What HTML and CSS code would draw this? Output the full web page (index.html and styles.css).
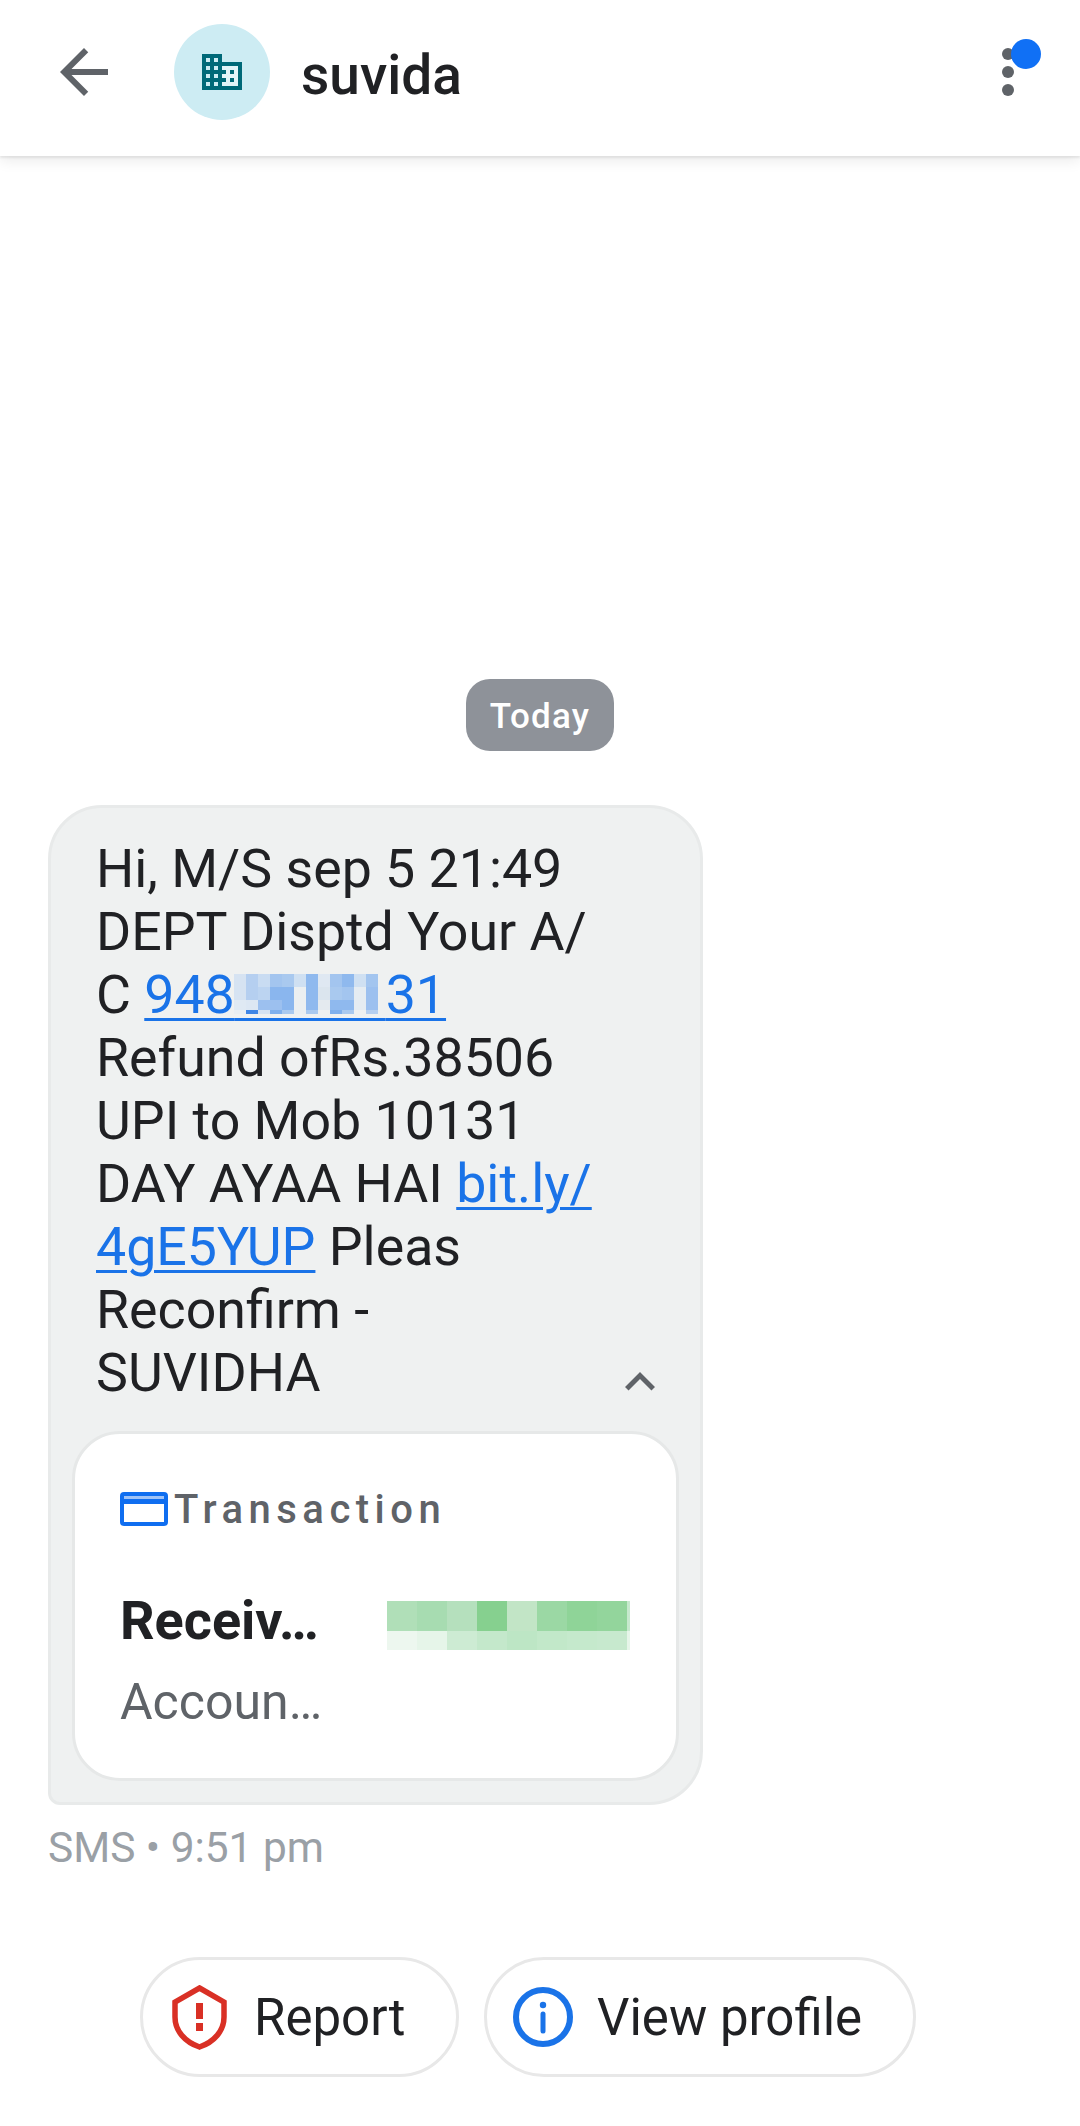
FILE: index.html
```html
<!DOCTYPE html>
<html lang="en">
<head>
<meta charset="utf-8">
<title>suvida</title>
<link rel="stylesheet" href="styles.css">
</head>
<body>
<header class="topbar">
  <svg class="back" viewBox="0 0 24 24"><path d="M20 11H7.83l5.59-5.59L12 4l-8 8 8 8 1.41-1.41L7.83 13H20v-2z"/></svg>
  <div class="avatar">
    <svg class="avatar-icon" viewBox="0 0 24 24"><path class="bldg-light" d="M12 9h8v10h-8z"/><path d="M12 7V3H2v18h20V7H12zM6 19H4v-2h2v2zm0-4H4v-2h2v2zm0-4H4V9h2v2zm0-4H4V5h2v2zm4 12H8v-2h2v2zm0-4H8v-2h2v2zm0-4H8V9h2v2zm0-4H8V5h2v2zm10 12h-8v-2h2v-2h-2v-2h2v-2h-2V9h8v10zm-2-8h-2v2h2v-2zm0 4h-2v2h2v-2z"/></svg>
  </div>
  <h1 class="title">suvida</h1>
  <div class="menu">
    <span class="dot"></span><span class="dot"></span><span class="dot"></span>
    <span class="badge"></span>
  </div>
</header>
<main class="thread">
  <div class="day-row"><span class="day">Today</span></div>
  <article class="bubble">
    <div class="body-row">
      <p class="message">Hi, M/S sep 5 21:49<br>DEPT Disptd Your A/<br>C <a class="link" href="#">948<span class="masked">00000<svg class="mosaic-num" viewBox="0 0 152 40" shape-rendering="crispEdges">
        <g><rect x="0" y="0" width="152" height="40" fill="#eff1f1"/>
        <rect x="0" y="0" width="12" height="26" fill="#d6e3f2"/><rect x="0" y="26" width="12" height="10" fill="#dfe9f3"/><rect x="0" y="36" width="12" height="4" fill="#e8eef3"/>
        <rect x="12" y="0" width="12" height="26" fill="#b5cff0"/><rect x="12" y="26" width="12" height="10" fill="#dce7f3"/><rect x="12" y="36" width="12" height="4" fill="#3f86e6"/>
        <rect x="24" y="0" width="12" height="13" fill="#c9dcf2"/><rect x="24" y="13" width="12" height="13" fill="#bcd4f1"/><rect x="24" y="26" width="12" height="10" fill="#9cc0ef"/><rect x="24" y="36" width="12" height="4" fill="#d6e3f2"/>
        <rect x="36" y="0" width="12" height="13" fill="#a3c5ef"/><rect x="36" y="13" width="12" height="13" fill="#8ab6ee"/><rect x="36" y="26" width="12" height="10" fill="#9cc0ef"/><rect x="36" y="36" width="12" height="4" fill="#7fb0ed"/>
        <rect x="48" y="0" width="12" height="13" fill="#a9c9ef"/><rect x="48" y="13" width="12" height="23" fill="#8ab6ee"/><rect x="48" y="36" width="12" height="4" fill="#a9c9ef"/>
        <rect x="60" y="0" width="12" height="13" fill="#cfe0f2"/><rect x="60" y="13" width="12" height="27" fill="#ebeff1"/>
        <rect x="72" y="0" width="12" height="36" fill="#8fb9ee"/><rect x="72" y="36" width="12" height="4" fill="#a9c9ef"/>
        <rect x="84" y="0" width="12" height="13" fill="#dfe8f2"/><rect x="84" y="13" width="12" height="13" fill="#dbe5ee"/><rect x="84" y="26" width="12" height="10" fill="#e4eaef"/>
        <rect x="96" y="0" width="12" height="13" fill="#a3c5ef"/><rect x="96" y="13" width="12" height="13" fill="#a9c9ef"/><rect x="96" y="26" width="12" height="10" fill="#8fb9ee"/><rect x="96" y="36" width="12" height="4" fill="#7fb0ed"/>
        <rect x="108" y="0" width="12" height="13" fill="#8fb9ee"/><rect x="108" y="13" width="12" height="13" fill="#a3c5ef"/><rect x="108" y="26" width="12" height="10" fill="#8fb9ee"/><rect x="108" y="36" width="12" height="4" fill="#a9c9ef"/>
        <rect x="120" y="0" width="12" height="13" fill="#cfe0f2"/><rect x="120" y="13" width="12" height="23" fill="#e5ecf2"/>
        <rect x="132" y="0" width="12" height="13" fill="#a3c5ef"/><rect x="132" y="13" width="12" height="23" fill="#9cc0ef"/><rect x="132" y="36" width="12" height="4" fill="#b5cff0"/></g>
      </svg></span>31</a><br>Refund ofRs.38506<br>UPI to Mob 10131<br>DAY AYAA HAI <a class="link" href="#">bit.ly/</a><br><a class="link" href="#">4gE5YUP</a> Pleas<br>Reconfirm -<br>SUVIDHA</p>
      <svg class="chevron" viewBox="0 0 24 24"><path d="M7.41 15.41 12 10.83l4.59 4.58L18 14l-6-6-6 6z"/></svg>
    </div>
    <section class="card">
      <div class="card-head">
        <svg class="card-icon" viewBox="0 0 48 34"><path class="card-stripe" d="M4 4h40v3H4z"/><path class="card-shape" d="M4 0h40a4 4 0 0 1 4 4v26a4 4 0 0 1-4 4H4a4 4 0 0 1-4-4V4a4 4 0 0 1 4-4zM4 4v3h40V4zM4 12v18h40V12z"/></svg>
        <span class="card-label">Transaction</span>
      </div>
      <div class="card-row">
        <span class="card-name">Receiv…</span>
        <svg class="mosaic-amt" viewBox="0 0 243 49" shape-rendering="crispEdges">
          <rect x="0" y="0" width="30" height="30" fill="#b0dfb8"/><rect x="30" y="0" width="30" height="30" fill="#a7dcb1"/><rect x="60" y="0" width="30" height="30" fill="#b5e0bd"/><rect x="90" y="0" width="30" height="30" fill="#86d08f"/><rect x="120" y="0" width="30" height="30" fill="#c2e5c6"/><rect x="150" y="0" width="30" height="30" fill="#9bd8a4"/><rect x="180" y="0" width="30" height="30" fill="#8fd498"/><rect x="210" y="0" width="30" height="30" fill="#93d59c"/><rect x="240" y="0" width="3" height="30" fill="#c7e9ce"/>
          <rect x="0" y="30" width="30" height="19" fill="#edf7ef"/><rect x="30" y="30" width="30" height="19" fill="#e6f5e9"/><rect x="60" y="30" width="30" height="19" fill="#cdebd3"/><rect x="90" y="30" width="30" height="19" fill="#c4e8cb"/><rect x="120" y="30" width="30" height="19" fill="#bde6c5"/><rect x="150" y="30" width="30" height="19" fill="#c2e8c9"/><rect x="180" y="30" width="30" height="19" fill="#c5e9cc"/><rect x="210" y="30" width="30" height="19" fill="#c7e9ce"/><rect x="240" y="30" width="3" height="19" fill="#e6f5e9"/>
        </svg>
      </div>
      <div class="card-sub">Accoun…</div>
    </section>
  </article>
  <div class="meta">SMS • 9:51 pm</div>
  <div class="actions">
    <button class="chip">
      <svg class="chip-shield" viewBox="0 0 55 65"><path class="shield-line" d="M27.5 3 52 17v15c0 14-10 25-24.500 30C13 57 3 46 3 32V17z"/><path class="shield-mark" d="M24 18h7v16h-7zM24 38h7v8h-7z"/></svg>
      <span>Report</span>
    </button>
    <button class="chip">
      <svg class="chip-info" viewBox="0 0 60 60"><circle class="info-ring" cx="30" cy="30" r="27"/><circle class="info-dot" cx="30" cy="18" r="3.200"/><path class="info-bar" d="M30 27v17"/></svg>
      <span>View profile</span>
    </button>
  </div>
</main>
</body>
</html>
```
FILE: styles.css
```css
* { box-sizing: border-box; }
html, body { margin: 0; padding: 0; }
body {
  width: 1080px;
  height: 2126px;
  overflow: hidden;
  background: #fff;
  font-family: Roboto, "Liberation Sans", sans-serif;
  color: #202124;
}
.topbar {
  position: relative;
  height: 156px;
  display: flex;
  align-items: center;
  padding: 0 0 12px 48px;
  background: #fff;
  box-shadow: 0 2px 2px rgba(0,0,0,.07), 0 4px 14px rgba(0,0,0,.09);
}
.back { width: 72px; height: 72px; fill: #5f6368; flex: none; }
.avatar {
  width: 96px;
  height: 96px;
  margin-left: 54px;
  border-radius: 50%;
  background: #cdecf3;
  display: flex;
  align-items: center;
  justify-content: center;
  flex: none;
}
.avatar-icon { width: 48px; height: 48px; fill: #006978; }
.bldg-light { fill: #e2f4f8; }
.title {
  margin: 6px 0 0 31px;
  font-size: 55px;
  font-weight: 500;
  line-height: 60px;
  color: #202124;
}
.menu {
  margin-left: auto;
  margin-right: 66px;
  width: 12px;
  display: flex;
  flex-direction: column;
  gap: 6px;
  position: relative;
}
.dot { width: 12px; height: 12px; border-radius: 50%; background: #5f6368; }
.badge {
  position: absolute;
  top: -9px;
  left: 9px;
  width: 30px;
  height: 30px;
  border-radius: 50%;
  background: #1070f5;
}
.thread { padding: 523px 0 0 48px; }
.day-row { display: flex; width: 984px; justify-content: center; }
.day {
  width: 148px;
  height: 72px;
  border-radius: 24px;
  background: #8e9299;
  color: #fff;
  font-size: 35px;
  font-weight: 500;
  letter-spacing: 1.200px;
  line-height: 76px;
  text-align: center;
}
.bubble {
  width: 655px;
  height: 1000px;
  margin-top: 54px;
  padding: 29px 21px 0;
  background: #eff1f1;
  border: 3px solid #e8eaea;
  border-radius: 54px 54px 54px 12px;
}
.body-row { display: flex; justify-content: space-between; align-items: flex-end; }
.message {
  margin: 0 0 0 24px;
  font-size: 53.700px;
  line-height: 63px;
  color: #202124;
  white-space: nowrap;
}
.link { color: #1a73e8; text-decoration: underline; text-decoration-thickness: 3px; text-underline-offset: 5px; }
.masked { position: relative; }
.mosaic-num { position: absolute; left: -1px; top: 11px; width: 152px; height: 40px; display: block; }
.chevron { width: 60px; height: 60px; fill: #5f6368; margin: 0 9px -8px 0; flex: none; }
.card {
  height: 350px;
  margin-top: 27px;
  padding: 0 46px 0 45px;
  background: #fff;
  border: 3px solid #e6e8e8;
  border-radius: 48px;
}
.card-head { display: flex; align-items: center; height: 48px; margin-top: 51px; gap: 6px; }
.card-icon { width: 48px; height: 34px; flex: none; }
.card-stripe { fill: #9fc3f7; }
.card-shape { fill: #0f6ef0; fill-rule: evenodd; }
.card-label {
  font-size: 40px;
  font-weight: 500;
  letter-spacing: 5.500px;
  color: #5f6368;
}
.card-row { display: flex; justify-content: space-between; align-items: flex-start; margin-top: 68px; }
.card-name { font-size: 54px; font-weight: 700; line-height: 60px; color: #202124; margin-top: -10px; }
.mosaic-amt { width: 243px; height: 49px; display: block; }
.card-sub { font-size: 50px; line-height: 60px; color: #5f6368; margin-top: 21px; }
.meta { margin-top: 20px; font-size: 42.400px; line-height: 46px; color: #9aa0a6; }
.actions { display: flex; gap: 25px; margin: 86px 0 0 92px; }
.chip {
  height: 120px;
  display: flex;
  align-items: center;
  background: #fff;
  border: 3px solid #e8e8e8;
  border-radius: 60px;
  font-family: inherit;
  font-size: 51px;
  color: #202124;
  padding: 0;
}
.chip:first-child { width: 319px; padding-left: 29px; gap: 27px; }
.chip:last-child { width: 432px; padding-left: 26px; gap: 24px; }
.chip-shield { width: 55px; height: 65px; flex: none; }
.shield-line { fill: none; stroke: #d93025; stroke-width: 5.500; }
.shield-mark { fill: #d93025; }
.chip-info { width: 60px; height: 60px; flex: none; }
.info-ring { fill: none; stroke: #1a73e8; stroke-width: 6; }
.info-dot { fill: #1a73e8; }
.info-bar { fill: none; stroke: #1a73e8; stroke-width: 5; stroke-linecap: round; }
```
